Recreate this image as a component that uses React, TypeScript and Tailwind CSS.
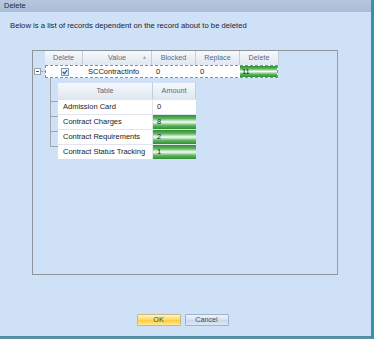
import React from "react";

const font = "font-['Liberation_Sans','Arial',sans-serif]";
const green =
  "bg-[linear-gradient(to_bottom,#2f8f2f_0%,#5fb35f_25%,#f4fff4_50%,#5fb35f_75%,#2f8f2f_100%)]";

const masterCols = [
  { label: "Delete", w: "w-[38px]" },
  { label: "Value", w: "w-[69px]" },
  { label: "Blocked", w: "w-[44px]" },
  { label: "Replace", w: "w-[44px]" },
  { label: "Delete", w: "w-[39px]" },
];

const children = [
  { name: "Admission Card", amount: "0", bar: false },
  { name: "Contract Charges", amount: "8", bar: true },
  { name: "Contract Requirements", amount: "2", bar: true },
  { name: "Contract Status Tracking", amount: "1", bar: true },
];

function HeaderCell({ label, w, h, sort }: { label: string; w: string; h: string; sort?: boolean }) {
  return (
    <div
      className={`${w} ${h} relative flex items-center justify-center border-r border-[#c3cfdd] bg-[linear-gradient(to_bottom,#f7f9fc,#dfe7f1)] text-[7.2px] text-[#5a6a80]`}
    >
      {label}
      {sort && <span className="absolute right-[4px] text-[5px] text-[#9aa8b8]">▲</span>}
    </div>
  );
}

export default function App() {
  return (
    <div className={`${font} w-[374px] h-[339px] flex flex-col bg-[#cfe1f7] border-r-[3px] border-r-[#3b90ae] overflow-hidden`}>
      {/* title bar */}
      <div className="h-[12px] flex items-center pl-[4px] bg-[linear-gradient(to_bottom,#b6c8de,#a9bdd6)] text-[7.5px] text-[#1e2a3a]">
        Delete
      </div>

      <div className="flex-1 flex flex-col">
        <div className="h-[38px] pl-[10px] pt-[8px] text-[7.7px] text-[#1a2230]">
          Below is a list of records dependent on the record about to be deleted
        </div>

        {/* grid panel */}
        <div className="ml-[32px] w-[306px] h-[225px] border border-[#8f949a] border-r-[#9a9ea4] flex flex-col">
          {/* header */}
          <div className="flex">
            <div className="w-[12px] h-[14px]" />
            {masterCols.map((c, i) => (
              <HeaderCell key={i} label={c.label} w={c.w} h="h-[14px]" sort={i === 1} />
            ))}
          </div>

          {/* data row */}
          <div className="flex items-center h-[13px]">
            <div className="w-[12px] h-full flex items-center pl-[1px]">
              <div className="w-[7px] h-[7px] border border-[#9aa4ae] bg-white flex items-center justify-center">
                <div className="w-[3px] h-px bg-[#4a5560]" />
              </div>
              <div className="flex-1 border-t border-dotted border-[#9aa4ae]" />
            </div>
            <div className="flex h-full border border-dashed border-[#8a8f96] bg-white text-[7.5px] text-[#1a1a1a]">
              <div className="w-[37px] flex items-center justify-center">
                <div className="w-[8px] h-[8px] border border-[#7f9db9] bg-[linear-gradient(to_bottom,#f0f5fb,#d6e2ef)] flex items-center justify-center">
                  <svg width="6" height="6" viewBox="0 0 6 6">
                    <path d="M0.8 3 L2.4 4.6 L5.2 1.2" fill="none" stroke="#2a4f8a" strokeWidth="1.1" />
                  </svg>
                </div>
              </div>
              <div className="w-[69px] flex items-center pl-[5px]">SCContractInfo</div>
              <div className="w-[44px] flex items-center pl-[4px]">0</div>
              <div className="w-[44px] flex items-center pl-[4px]">0</div>
              <div className={`w-[37px] flex items-center pl-[2px] ${green}`}>11</div>
            </div>
          </div>

          {/* child detail */}
          <div className="flex mt-[5px]">
            <div className="w-[25px] flex flex-col">
              <div className="h-[16px] ml-[17px] border-l border-[#a0a6ad] -mt-[5px] pt-[5px]" />
              {children.map((c, i) => (
                <div key={i} className="h-[15px] flex flex-col ml-[17px]">
                  <div className="h-[8px] border-l border-b border-[#a0a6ad]" />
                  <div className={`flex-1 ${i === children.length - 1 ? "" : "border-l border-[#a0a6ad]"}`} />
                </div>
              ))}
            </div>
            <div className="flex flex-col">
              <div className="flex">
                <HeaderCell label="Table" w="w-[95px]" h="h-[16px]" />
                <HeaderCell label="Amount" w="w-[43px]" h="h-[16px]" />
              </div>
              {children.map((c, i) => (
                <div key={i} className="flex h-[15px] border-t border-[#dfe6ee] bg-white text-[7.5px] text-[#1a1a1a]">
                  <div className="w-[95px] flex items-center pl-[5px] border-r border-[#dfe6ee]">{c.name}</div>
                  <div className={`w-[43px] flex items-center pl-[4px] ${c.bar ? green : ""}`}>{c.amount}</div>
                </div>
              ))}
            </div>
          </div>
        </div>

        {/* buttons */}
        <div className="flex justify-center gap-[4px] mt-[39px] pr-[6px]">
          <button className="w-[44px] h-[12px] border border-[#c5b88a] rounded-[1px] bg-[linear-gradient(to_bottom,#fff3c8,#ffd75a_50%,#ffc93a_51%,#ffe79a)] text-[7.2px] text-[#3a4a60] flex items-center justify-center">
            OK
          </button>
          <button className="w-[44px] h-[12px] border border-[#9fb3cc] rounded-[1px] bg-[linear-gradient(to_bottom,#eef3fa,#d7e2f0_50%,#c8d7ea_51%,#dfe8f4)] text-[7.2px] text-[#3a4a60] flex items-center justify-center">
            Cancel
          </button>
        </div>
      </div>

      <div className="h-[3px] bg-[linear-gradient(to_bottom,#3b90ae,#7a8a90)]" />
    </div>
  );
}
